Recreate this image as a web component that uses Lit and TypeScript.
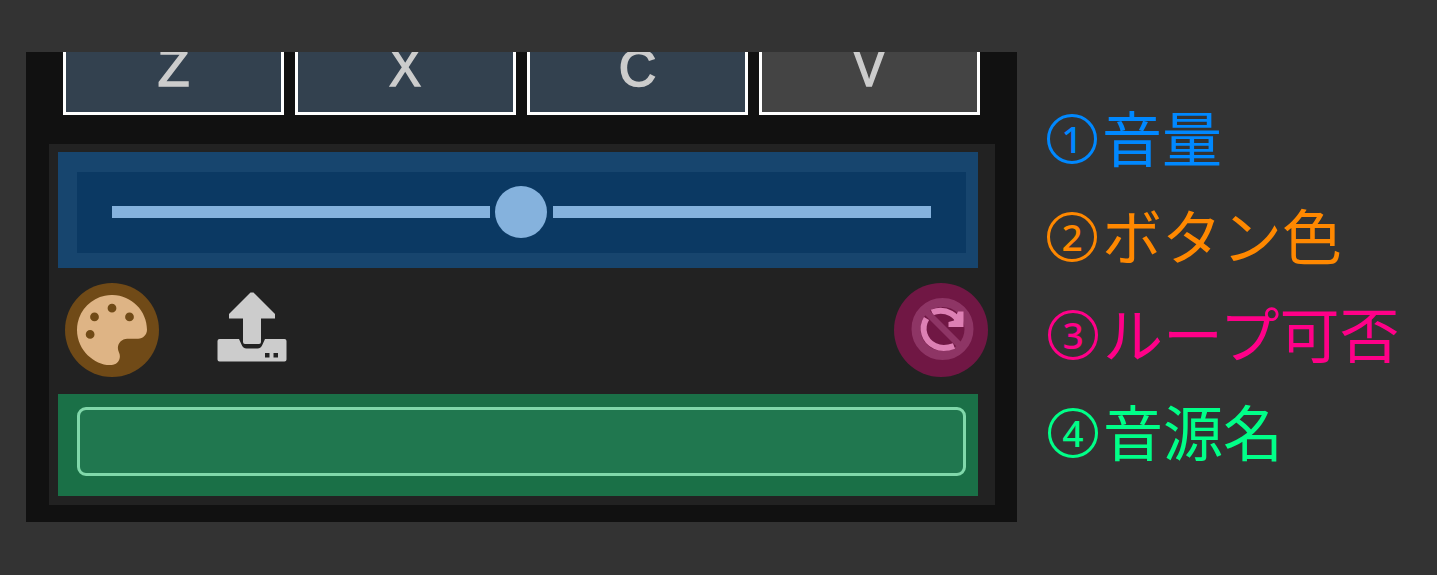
import { LitElement, html, css } from "lit";
import { customElement } from "lit/decorators.js";
import { classMap } from "lit/directives/class-map.js";

@customElement("app-root")
export class AppRoot extends LitElement {
  static styles = css`
    :host { display: flex; box-sizing: border-box; width: 1437px; height: 575px; overflow: hidden;
      padding: 52px 0 0 26px; background: #333; font-family: "Liberation Sans", Arial, sans-serif; }
    * { box-sizing: border-box; }
    .frame { width: 991px; height: 470px; background: #111; overflow: hidden; padding-left: 23px; flex: none; }
    .keys { display: flex; gap: 11px; padding-left: 14px; height: 63px; }
    .key { width: 221px; height: 63px; border: 3px solid #fff; border-top: 0; background: #33414f; color: #ccc;
      font-size: 51px; line-height: 33px; text-align: center; }
    .key.idle { background: #444; }
    .glyph { display: inline-block; transform: scaleX(1.02); -webkit-text-stroke: 1.6px #ccc; }
    .glyph.narrow { transform: scaleX(0.93); }
    .panel { margin-top: 29px; width: 946px; height: 361px; background: #222; padding: 8px 0 0 9px; }
    .volume { width: 920px; height: 116px; background: #17456e; padding: 20px 12px 15px 19px; }
    .slider { height: 81px; background: #0b3963; display: flex; align-items: center; padding: 0 35px 1px 34.500px; }
    .track { height: 12px; flex: 1; background: #85b2dd; }
    .knob { width: 52px; height: 52px; border-radius: 50%; background: #85b2dd; margin: 0 5.500px; }
    .tools { display: flex; align-items: center; height: 126px; width: 930px; padding: 0 0 2px 7px; }
    .round { width: 94px; height: 94px; border-radius: 50%; display: flex; align-items: center; justify-content: center; }
    .color { background: #704a17; }
    .loop { background: #701744; margin-left: auto; }
    .upload { margin-left: 58px; }
    svg { display: block; }
    .source { width: 920px; height: 102px; background: #1a7047; padding: 13px 12px 20px 19px; }
    .name { height: 69px; border: 3px solid #80d8aa; border-radius: 9px; background: #20774f; }
    .legend { font-family: "Noto Sans CJK JP", sans-serif; font-size: 60px; line-height: 98px;
      padding: 34px 0 0 30px; white-space: nowrap; }
    .legend > div { display: flex; height: 98px; }
    .label { padding-top: 0.500px; }
    .num { width: 50px; height: 50px; margin: 28px 5px 0 0; border: 3px solid currentColor; border-radius: 50%;
      font: 500 37px/43px "Noto Sans", sans-serif; text-align: center; }
    .n1 { color: #08f; } .n2 { color: #f80; } .n3 { color: #f08; } .n4 { color: #0f8; }
    .legend > .n3, .legend > .n4 { padding-left: 1px; }
  `;

  private keys = ["Z", "X", "C", "V"];
  private labels = [["1", "音量"], ["2", "ボタン色"], ["3", "ループ可否"], ["4", "音源名"]];

  render() {
    return html`
      <div class="frame">
        <div class="keys">
          ${this.keys.map((k) => html`<div class=${classMap({ key: true, idle: k === "V" })}><span class=${classMap({ glyph: true, narrow: k === "V" || k === "X" })}>${k}</span></div>`)}
        </div>
        <div class="panel">
          <div class="volume"><div class="slider"><div class="track"></div><div class="knob"></div><div class="track"></div></div></div>
          <div class="tools">
            <div class="round color">
              <svg width="70" height="70" viewBox="0 0 512 512" fill="#deb485"><path d="M204.3 5C104.9 24.4 24.8 104.3 5.2 203.4c-37 187 131.7 326.4 258.8 306.7 41.2-6.4 61.4-54.6 42.5-91.7-23.1-45.4 9.9-98.4 60.9-98.4h79.7c35.8 0 64.8-29.6 64.9-65.3C511.5 97.1 368.1-26.9 204.3 5zM96 320a32 32 0 1 1 0-64 32 32 0 0 1 0 64zm32-128a32 32 0 1 1 0-64 32 32 0 0 1 0 64zm128-64a32 32 0 1 1 0-64 32 32 0 0 1 0 64zm128 64a32 32 0 1 1 0-64 32 32 0 0 1 0 64z"/></svg>
            </div>
            <svg class="upload" width="70" height="76" viewBox="217 292 70 76" fill="#ccc">
              <path d="M250.5 292.5h3L275 314v4.500h-14V342q0 2-2 2h-14q-2 0-2-2v-23.500h-14V314z"/>
              <path fill-rule="evenodd" d="M219.500 339H239l2.500 5.500q1.500 4 5 4h11q3.500 0 5-4l2.500-5.500h19.500q2 0 2 2v18.500q0 2-2 2h-65q-2 0-2-2V341q0-2 2-2zM265 353v4.500h4.500V353zM273.500 353v4.500h4.500V353z"/>
            </svg>
            <div class="round loop">
              <svg width="94" height="94" viewBox="894 283 94 94">
                <circle cx="942.500" cy="329" r="26.500" fill="none" stroke="#8e3565" stroke-width="9"/>
                <path d="M932 312.500Q942 308.500 951 313.500Q956.500 316.500 959.500 323" fill="none" stroke="#dd80b4" stroke-width="6"/>
                <path d="M958 311.500h5.500v15.500h-15v-5l5.500-1.500z" fill="#dd80b4"/>
                <path d="M926.500 318.500A19 19 0 0 0 935 346Q943 350 954 346" fill="none" stroke="#dd80b4" stroke-width="6"/>
                <path d="M925 310.500L962 347.500" stroke="#8e3565" stroke-width="6.500"/>
              </svg>
            </div>
          </div>
          <div class="source"><div class="name"></div></div>
        </div>
      </div>
      <div class="legend">${this.labels.map(([n, t], i) => html`<div class="n${i + 1}"><span class="num">${n}</span><span class="label">${t}</span></div>`)}</div>
    `;
  }
}
